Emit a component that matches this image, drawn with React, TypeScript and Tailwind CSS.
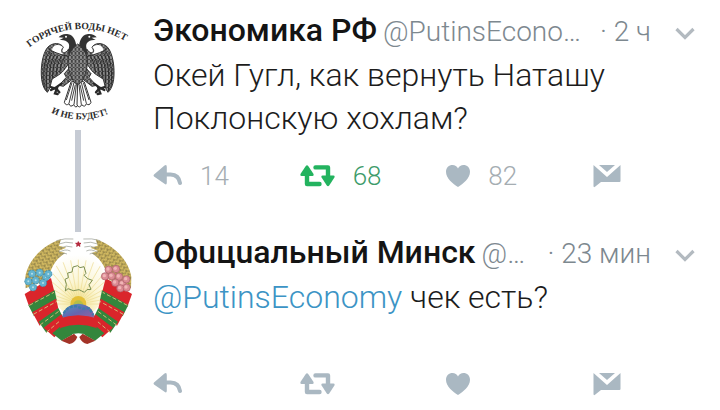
import { ReactNode } from 'react';

type Counts = { retweeted?: boolean; replies?: number; retweets?: number; likes?: number };

interface TweetProps extends Counts {
  avatar: ReactNode;
  name: string;
  handle: string;
  time: string;
  threaded?: boolean;
  children: ReactNode;
}

/* Icons */
function ReplyIcon() {
  return (
    <svg width="29" height="24" viewBox="0 0 29 24" aria-hidden="true">
      <path d="M1 10.600 11.500 1.600Q13.800 0 13.800 3V18.500Q13.800 21.500 11.500 19.800L1 12.400Q0 11.500 1 10.600Z" fill="currentColor" />
      <path d="M12 10.500h5.500Q26 11 27 19" fill="none" stroke="currentColor" strokeWidth="4" strokeLinecap="round" />
    </svg>
  );
}

function RetweetIcon() {
  return (
    <svg width="35" height="24" viewBox="0 0 35 24" aria-hidden="true">
      <g fill="none" stroke="currentColor" strokeWidth="4.400" strokeLinecap="round" strokeLinejoin="round">
        <path d="M7 9v11h12.500" />
        <path d="M28 14V3.400H15.500" />
      </g>
      <path d="M.6 9.800 5.800 2Q7 .4 8.200 2l5.200 7.800Q14.200 11.900 12.400 11.900H1.600Q-.2 11.900.6 9.800Z" fill="currentColor" />
      <path d="M21.600 13.600 26.800 21.400Q28 23 29.200 21.400l5.200-7.800Q35.200 11.500 33.400 11.500H22.600Q20.800 11.500 21.600 13.600Z" fill="currentColor" />
    </svg>
  );
}

function HeartIcon() {
  return (
    <svg width="24" height="24" viewBox="0 0 24 24" aria-hidden="true">
      <path d="M12 23C7 20 0 14.500 0 7.800 0 3.500 3 1 6.500 1 9 1 11 2.300 12 4.600 13 2.300 15 1 17.500 1 21 1 24 3.500 24 7.800 24 14.500 17 20 12 23Z" fill="currentColor" />
    </svg>
  );
}

function MessageIcon() {
  return (
    <svg width="28" height="24" viewBox="0 0 28 24" fill="currentColor" aria-hidden="true">
      <path d="M6 1h16L14 8Z" />
      <path d="M.500 1 14 13 27.500 1V17q0 1-1 1H8L2 22.800Q.500 23.800.500 22Z" />
    </svg>
  );
}

function ChevronIcon() {
  return (
    <svg width="20" height="13" viewBox="0 0 20 13" fill="none" aria-hidden="true">
      <path d="M1.500 2 10 10.500 18.500 2" stroke="currentColor" strokeWidth="3.200" />
    </svg>
  );
}

/* Double-headed eagle, one half is drawn and mirrored */
function EagleHalf() {
  return (
    <g>
      <path d="M184 132C184 112 176 94 160 91 148 88 136 93 131 100L146 101 134 108C146 107 154 109 160 117 166 127 160 138 154 148L186 160Z" fill="#333" />
      <circle cx="153" cy="98" r="3" fill="#fff" />
      <path d="M160 136C149 154 133 145 145 130 138 116 113 114 98 130 82 149 76 192 80 226 83 246 89 258 97 265 105 256 107 240 111 226 123 216 138 212 150 194L167 170Z" fill="url(#feathers)" stroke="#333" strokeWidth="3" />
      <path d="M144 130C132 117 111 123 111 140 122 148 134 153 146 151 136 146 136 137 144 130Z" fill="#fff" />
      <g fill="none" stroke="#292929" strokeWidth="3">
        <path d="M111 146C96 168 92 215 96 262M120 151C105 174 102 212 105 238M129 154C116 174 113 202 112 224M139 157C128 176 124 196 123 215M148 160C139 177 136 191 134 206M104 142C87 163 84 205 88 250" />
        <path d="M98 133Q116 147 162 158" />
      </g>
      <path d="M163 192 148 209 154 220 132 244 145 247 177 222Z" fill="url(#feathers)" stroke="#333" strokeWidth="3" />
      <path d="M139 239 119 253 107 249M124 250 108 258M127 250 120 268 128 270M122 252 133 265" fill="none" stroke="#292929" strokeWidth="7" strokeLinecap="round" />
      <path d="M188 229 168 234 148 295Q153 307 162 299 166 312 176 302 182 315 190 303Z" fill="#fff" stroke="#333" strokeWidth="3" />
      <path d="M177 235 162 298M185 234 177 302M171 236 154 288M181 242 170 290" stroke="#444" strokeWidth="3" />
    </g>
  );
}

function EagleAvatar() {
  return (
    <svg className="w-full" viewBox="27 30 324 324" role="img" aria-label="Экономика РФ">
      <defs>
        <pattern id="feathers" width="11" height="12" patternUnits="userSpaceOnUse">
          <rect width="11" height="12" fill="#444" />
          <path d="M1 0Q0 10 5.500 11 11 10 10 0" fill="none" stroke="#b5b5b5" strokeWidth="2" />
        </pattern>
        <path id="top-arc" d="M44 130A250 250 0 0 1 352 126" />
        <path id="bottom-arc" d="M108 326A210 210 0 0 0 292 324" />
      </defs>
      <EagleHalf />
      <g transform="translate(376 0) scale(-1 1)">
        <EagleHalf />
      </g>
      <path d="M188 120Q170 132 160 158 154 194 176 234L188 242 200 234Q222 194 216 158 206 132 188 120Z" fill="url(#feathers)" stroke="#333" strokeWidth="3" />
      <g fill="#2b2b2b" fontFamily="Liberation Serif, serif" fontWeight="700">
        <text fontSize="29">
          <textPath href="#top-arc">ГОРЯЧЕЙ ВОДЫ НЕТ</textPath>
        </text>
        <text fontSize="28">
          <textPath href="#bottom-arc">И НЕ БУДЕТ!</textPath>
        </text>
      </g>
    </svg>
  );
}

/* Emblem of Belarus */
function RibbonHalf() {
  return (
    <g>
      <path d="M138 43C88 58 40 102 31 155L32 190 98 164C108 130 120 102 151 84L130 78 154 68 132 62Z" fill="url(#wheat)" />
      <g fill="none" stroke="#92978e" strokeWidth="2">
        <path d="M124 47Q150 39 175 42M132 57Q152 48 174 54M134 70Q154 59 172 66M132 83Q150 70 166 78M128 97Q144 80 156 87" />
      </g>
      <path d="M29 207 108 159 119 204 43 246Z" fill="#da252b" />
      <path d="M40 240 119 196 125 225 57 274Z" fill="#33863c" />
      <path d="M52 262 123 221 130 250 74 302Z" fill="#da252b" />
      <path d="M71 290 130 249 143 275 94 323Z" fill="#33863c" />
      <path d="M86 308 139 268 154 300 118 337Z" fill="#da252b" />
      <path d="M112 325 151 292 172 329 140 347Z" fill="#33863c" />
      <path d="M43 241 117 202M55 268 126 229M75 300 134 257M94 322 145 279" stroke="#d3b777" strokeWidth="3" strokeDasharray="12 7" />
      <path d="M139 347 177 326 187 336Q180 354 163 357Z" fill="#a33327" />
    </g>
  );
}

function EmblemAvatar() {
  const rays = Array.from({ length: 19 }, (_, i) => i * 10 - 90);
  const berries = [
    [281, 134], [303, 132], [270, 154], [290, 153], [312, 155], [301, 173], [322, 176], [334, 163], [316, 190], [335, 188],
  ];
  const flowers = [
    [51, 146], [74, 143], [93, 156], [40, 169], [62, 166], [84, 174], [54, 187], [100, 147],
  ];

  return (
    <svg className="w-full" viewBox="27 33 324 324" role="img" aria-label="Официальный Минск">
      <defs>
        <pattern id="wheat" width="14" height="12" patternUnits="userSpaceOnUse" patternTransform="rotate(32)">
          <rect width="14" height="12" fill="#9c8b4c" />
          <path d="M0 2Q5 2 6 10M14 2Q9 2 8 10" fill="none" stroke="#d6bd62" strokeWidth="4" />
        </pattern>
        <radialGradient id="glow" cx="50%" cy="80%" r="75%">
          <stop offset="0" stopColor="#f4e48c" />
          <stop offset=".45" stopColor="#fbf6d6" />
          <stop offset="1" stopColor="#fff" />
        </radialGradient>
        <clipPath id="sky">
          <path d="M190 82C145 82 111 125 111 166Q113 236 145 260H235Q267 236 269 166C269 125 235 82 190 82Z" />
        </clipPath>
        <linearGradient id="globe" x1="0" y1="0" x2="1" y2="1">
          <stop offset="0" stopColor="#4d97c4" />
          <stop offset=".55" stopColor="#6566ae" />
          <stop offset="1" stopColor="#9b5f9e" />
        </linearGradient>
      </defs>
      <g clipPath="url(#sky)">
        <rect x="100" y="80" width="180" height="190" fill="url(#glow)" />
        {rays.map((angle) => (
          <path key={angle} d="M190 212V104" transform={`rotate(${angle} 190 237)`} stroke="#eedd96" strokeWidth="2" />
        ))}
      </g>
      <path d="M150 163 160 158 158 144 171 141 174 126 188 122 195 128 207 125 213 145 207 151 218 161 232 166 222 179 228 193 216 194 208 202 192 194 175 197 159 191 151 198 154 178Z" fill="none" stroke="#7c8f52" strokeWidth="3" />
      <circle cx="190" cy="237" r="24" fill="#e4c03a" />
      <circle cx="190" cy="241" r="15" fill="#b5bd48" />
      <path d="M141 279Q145 239 190 236 235 239 239 279Z" fill="url(#globe)" />
      <path d="M146 265Q160 242 184 244L203 251 222 250 235 270" fill="none" stroke="#3c7cab" strokeWidth="7" strokeDasharray="9 4" />
      <RibbonHalf />
      <g transform="translate(380 0) scale(-1 1)">
        <RibbonHalf />
      </g>
      <path d="M130 281Q190 260 250 281L244 311Q190 292 136 311Z" fill="#da252b" />
      <path d="M136 309Q190 290 244 309L226 334Q190 315 154 334Z" fill="#33863c" />
      {flowers.map(([cx, cy]) => (
        <g key={`${cx}-${cy}`} fill="#64b4cf">
          <circle cx={cx} cy={cy} r="11" stroke="#397f9f" strokeWidth="2" strokeDasharray="6 4" />
          <circle cx={cx} cy={cy} r="3" fill="#b8dfe8" />
        </g>
      ))}
      {berries.map(([cx, cy]) => (
        <g key={`${cx}-${cy}`}>
          <circle cx={cx} cy={cy} r="11" fill="#dc8c94" stroke="#ab6069" strokeWidth="2" />
          <circle cx={cx - 2} cy={cy - 2} r="5" fill="#f0b5b6" />
        </g>
      ))}
      <path d="M190 50 192 55 198 55 193 59 195 64 190 61 185 64 187 59 182 55 188 55Z" fill="#b3263a" stroke="#b3263a" strokeWidth="3" />
    </svg>
  );
}

function Actions({ retweeted = false, replies, retweets, likes }: Counts) {
  const button = 'flex h-8 items-center gap-x-[18px]';
  return (
    <div className="grid grid-cols-[1fr_1fr_1fr_auto] pr-[74px] text-[26px] font-light leading-8 text-[#a5adb2]">
      <button type="button" aria-label="Ответить" className={button}>
        <span className="text-[#aab8c2]"><ReplyIcon /></span>
        {replies}
      </button>
      <button type="button" aria-label="Ретвитнуть" className={`${button} ${retweeted ? 'text-[#3d9b6a]' : ''}`}>
        <span className={retweeted ? 'text-[#23b35f]' : 'text-[#aab8c2]'}><RetweetIcon /></span>
        {retweets}
      </button>
      <button type="button" aria-label="Нравится" className={button}>
        <span className="text-[#aab8c2]"><HeartIcon /></span>
        {likes}
      </button>
      <button type="button" aria-label="Сообщение" className={button}>
        <span className="text-[#aab8c2]"><MessageIcon /></span>
      </button>
    </div>
  );
}

function Tweet({ avatar, name, handle, time, threaded = false, children, ...counts }: TweetProps) {
  return (
    <article className="flex gap-x-[21px] pl-6 pr-[25px]">
      <div className="flex w-[108px] shrink-0 flex-col items-center pt-1">
        {avatar}
        {threaded && <div className="mt-2 w-1.5 grow bg-[#c6cbd4]" />}
      </div>
      <div className={`min-w-0 grow ${threaded ? 'pb-10' : 'pb-2'}`}>
        <header className="flex h-10 items-baseline whitespace-nowrap text-[28px] leading-10 text-[#7d888f]">
          <h2 className="text-[32px] font-medium text-[#141414]">{name}</h2>
          <span className="ml-1.5 font-light">{handle}</span>
          <time className="ml-auto font-light">· {time}</time>
          <button type="button" aria-label="Ещё" className="ml-6 self-center pt-1.5 text-[#b3bac0]">
            <ChevronIcon />
          </button>
        </header>
        <p className="mb-5 mt-1 min-h-[72px] text-[32px] font-light leading-[43px] text-[#1c1c1c]">{children}</p>
        <Actions {...counts} />
      </div>
    </article>
  );
}

export default function App() {
  return (
    <main className="bg-white pt-2.5 font-['Roboto',sans-serif]">
      <Tweet
        avatar={<EagleAvatar />}
        name="Экономика РФ"
        handle="@PutinsEcono…"
        time="2 ч"
        threaded
        retweeted
        replies={14}
        retweets={68}
        likes={82}
      >
        Окей Гугл, как вернуть Наташу Поклонскую хохлам?
      </Tweet>
      <Tweet avatar={<EmblemAvatar />} name="Офuцuальный Минск" handle="@…" time="23 мин">
        <a href="#PutinsEconomy" className="text-[#3c94c5]">@PutinsEconomy</a> чек есть?
      </Tweet>
    </main>
  );
}
